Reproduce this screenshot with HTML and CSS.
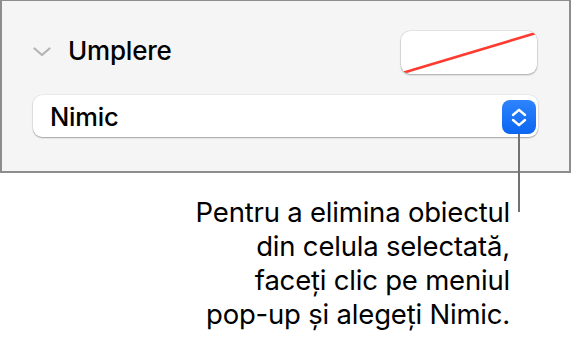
FILE: index.html
```html
<!DOCTYPE html>
<html lang="ro">
<head>
<meta charset="utf-8">
<link rel="stylesheet" href="styles.css">
</head>
<body>
<div class="panel">
  <div class="row">
    <div class="title">
      <svg class="disclosure" width="18" height="10" viewBox="0 0 18 10"><path d="M1.5 1.5 L9 8 L16.5 1.5" fill="none" stroke="#b4b4b4" stroke-width="2.2" stroke-linecap="round" stroke-linejoin="round"/></svg>
      <span class="label">Umplere</span>
    </div>
    <div class="swatch">
      <svg width="136" height="43" viewBox="0 0 136 43"><line x1="3" y1="41.5" x2="135" y2="2" stroke="#ff3b30" stroke-width="2.6"/></svg>
    </div>
  </div>
  <div class="popup">
    <span class="popup-value">Nimic</span>
    <span class="stepper">
      <svg width="34" height="34" viewBox="0 0 34 34"><path d="M11 15 L17 9.8 L23 15 M11 20 L17 25.2 L23 20" fill="none" stroke="#fff" stroke-width="2.4" stroke-linecap="round" stroke-linejoin="round"/></svg>
    </span>
  </div>
</div>
<p class="callout">Pentru a elimina obiectul<br>din celula selectată,<br>faceți clic pe meniul<br>pop-up și alegeți Nimic.</p>
</body>
</html>
```
FILE: styles.css
```css
html, body {
  margin: 0;
  padding: 0;
  background: #fff;
}
body {
  width: 572px;
  height: 340px;
  overflow: hidden;
  font-family: "Inter", "Liberation Sans", sans-serif;
  color: #000;
}
.panel {
  box-sizing: border-box;
  width: 571px;
  height: 173px;
  background: #f5f5f5;
  border: 2px solid #8d8d8d;
  border-top-width: 1px;
  padding: 30px 31px 0 31px;
}
.row {
  display: flex;
  align-items: center;
  justify-content: space-between;
  height: 43px;
}
.title {
  display: flex;
  align-items: center;
}
.disclosure {
  display: block;
  margin-top: -2px;
}
.label {
  margin-left: 17px;
  font-size: 26px;
  font-weight: 500;
  letter-spacing: -0.2px;
  margin-top: -4px;
}
.swatch {
  width: 136px;
  height: 43px;
  margin-right: 1px;
  background: #fff;
  border-radius: 9px;
  box-shadow: 0 0 0 0.5px rgba(0,0,0,0.12), 0 1px 2px rgba(0,0,0,0.28);
  overflow: hidden;
}
.swatch svg {
  display: block;
}
.popup {
  margin-top: 21px;
  height: 42px;
  background: #fff;
  border-radius: 9px;
  box-shadow: 0 0 0 0.5px rgba(0,0,0,0.08), 0 1px 1.5px rgba(0,0,0,0.3);
  display: flex;
  align-items: center;
  justify-content: space-between;
  padding: 0 2px 0 17px;
}
.popup-value {
  font-size: 25.5px;
  font-weight: 500;
  letter-spacing: -0.2px;
}
.stepper {
  position: relative;
  width: 34px;
  height: 34px;
  border-radius: 8px;
  background: linear-gradient(#2d84fc, #0b66f1);
  margin-top: 2px;
}
.stepper svg {
  display: block;
}
.stepper::after {
  content: "";
  position: absolute;
  left: 16px;
  top: 100%;
  width: 2px;
  height: 78px;
  background: #727272;
}
.callout {
  margin: 22px 62px 0 0;
  text-align: right;
  font-size: 27.5px;
  line-height: 34px;
  letter-spacing: -0.2px;
}
```
